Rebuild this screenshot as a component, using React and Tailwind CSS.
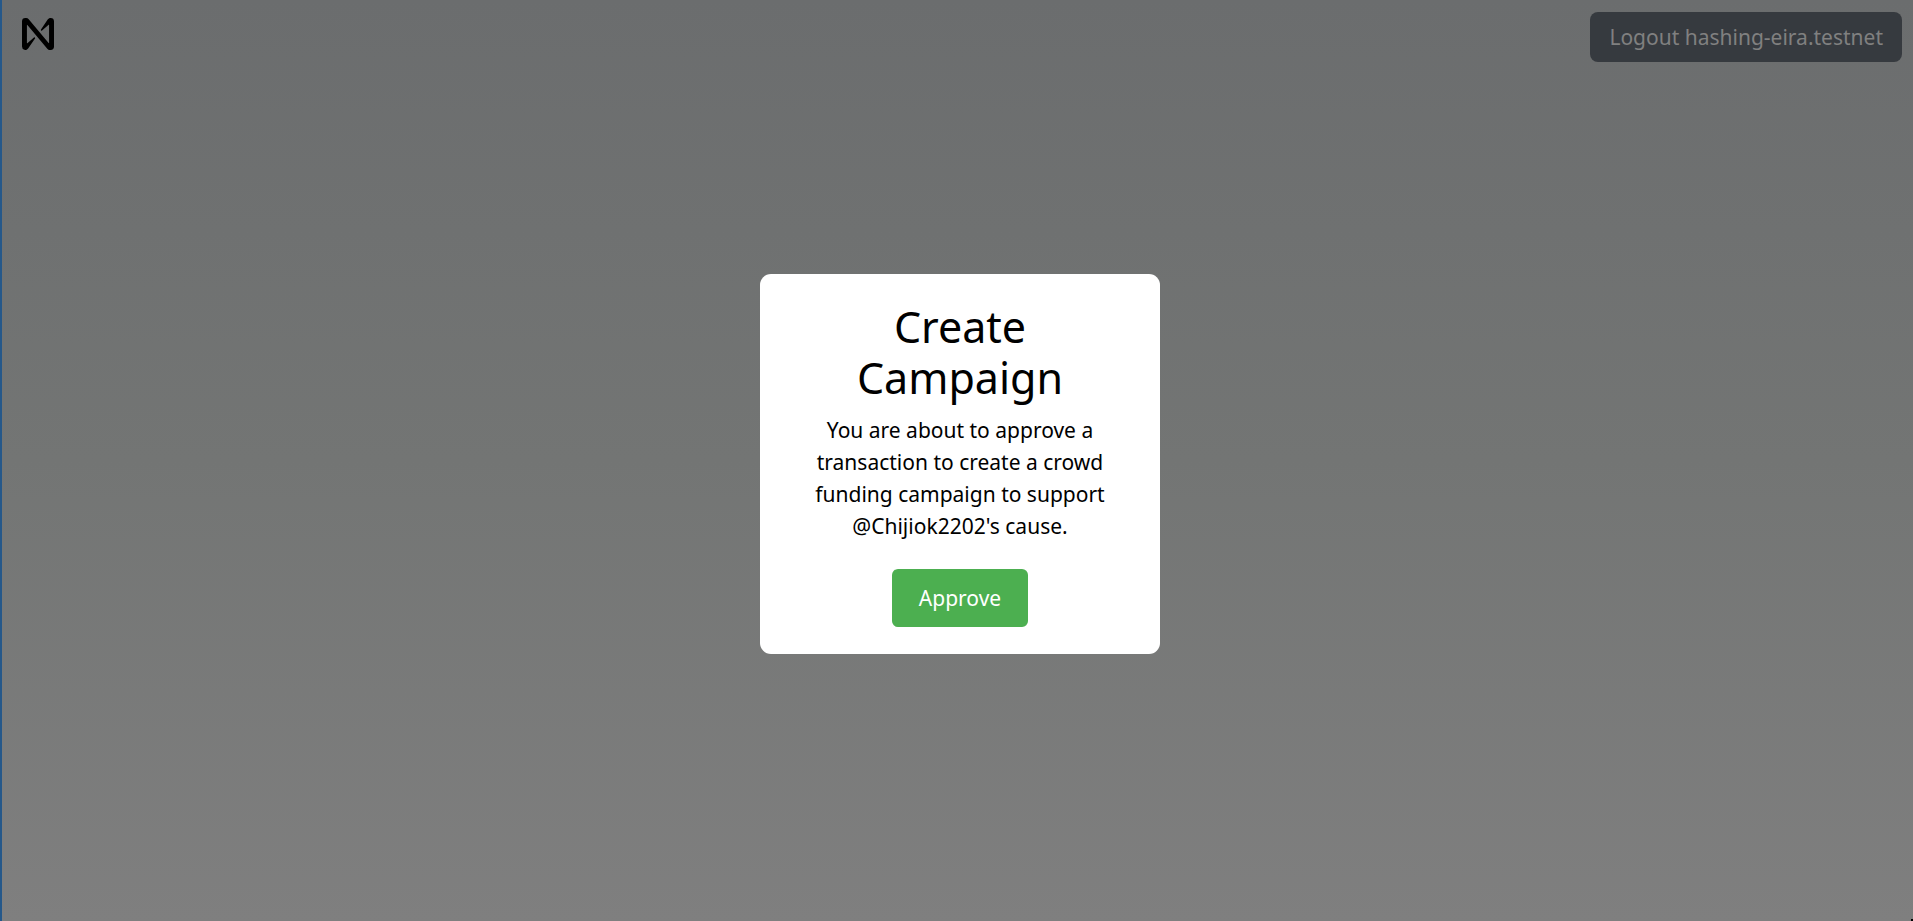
function NearLogo() {
  return (
    <svg viewBox="0 0 24 24" className="size-8 fill-black" role="img" aria-label="NEAR">
      <path d="M21.443 0c-.89 0-1.714.46-2.18 1.218l-5.017 7.448a.533.533 0 0 0 .792.7l4.938-4.282a.2.2 0 0 1 .334.151v13.41a.2.2 0 0 1-.354.128L5.03.905A2.555 2.555 0 0 0 3.078 0h-.521A2.557 2.557 0 0 0 0 2.557v18.886a2.557 2.557 0 0 0 4.736 1.338l5.017-7.448a.533.533 0 0 0-.792-.7l-4.938 4.283a.2.2 0 0 1-.333-.152V5.352a.2.2 0 0 1 .354-.128l14.924 17.87c.486.574 1.2.905 1.952.906h.521A2.558 2.558 0 0 0 24 21.445V2.557A2.558 2.558 0 0 0 21.443 0Z" />
    </svg>
  );
}

export default function App() {
  return (
    <div className="relative min-h-screen border-l-2 border-[#25588a] bg-linear-to-b from-[#6b6d6e] via-[#737574] to-[#7f7f7f] font-['Noto_Sans',sans-serif] text-[21px] leading-8 text-black">
      <header className="flex items-start justify-between pt-3 pr-[11px] pl-5">
        <div className="pt-1.5">
          <NearLogo />
        </div>
        <button type="button" className="rounded-lg bg-[#363a3f] px-[19px] py-[9px] text-[#808080]">
          Logout hashing-eira.testnet
        </button>
      </header>

      <div className="pointer-events-none fixed inset-0 flex items-center justify-center pt-[7px] pl-[7px]">
        <section
          role="dialog"
          aria-labelledby="dialog-title"
          className="pointer-events-auto w-[400px] rounded-[11px] bg-white px-[52px] py-[27px] text-center"
        >
          <h1 id="dialog-title" className="mb-[11px] px-8 text-[43px] leading-[51px]">
            Create Campaign
          </h1>
          <p className="mb-[27px]">
            You are about to approve a transaction to create a crowd funding campaign to support
            @Chijiok2202's cause.
          </p>
          <button type="button" className="rounded-md bg-[#4caf50] px-[27px] py-[13px] text-white">
            Approve
          </button>
        </section>
      </div>

      <span aria-hidden="true" className="absolute right-0 bottom-0 size-0.5 bg-black" />
    </div>
  );
}
